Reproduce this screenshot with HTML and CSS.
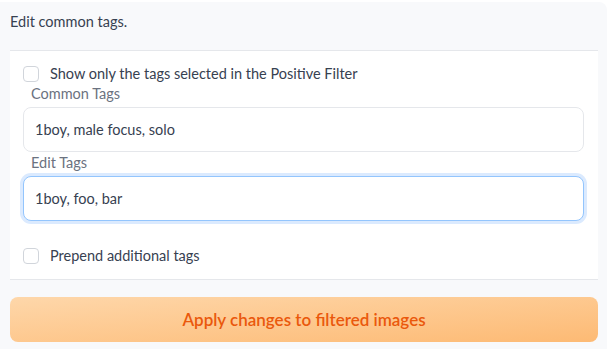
FILE: index.html
```html
<!DOCTYPE html>
<html>

<head>
    <link rel="stylesheet" href="styles.css">
</head>

<body>

    <div class="block">
        <p class="title">Edit common tags.</p>

        <div class="panel">
            <label class="check">
                <span class="box"></span>
                Show only the tags selected in the Positive Filter
            </label>

            <div class="field">
                <span class="field-label">Common Tags</span>
                <div class="text-input">1boy, male focus, solo</div>
            </div>

            <div class="field">
                <span class="field-label">Edit Tags</span>
                <div class="text-input focused">1boy, foo, bar</div>
            </div>

            <label class="check check-last">
                <span class="box"></span>
                Prepend additional tags
            </label>
        </div>

        <button class="apply">Apply changes to filtered images</button>
    </div>

</body>

</html>
```

FILE: styles.css
```css
body {
    margin: 0;
    background-color: #ffffff;
    font-family: "Source Sans Pro", Lato, "Noto Sans", sans-serif;
    font-size: 14.5px;
    color: #374151;
}

.block {
    width: 607px;
    height: 347px;
    margin-top: 2px;
    padding: 0 9px 0 10px;
    box-sizing: border-box;
    background-color: #f8f9fb;
    border-radius: 0 8px 0 0;
    overflow: hidden;
}

.title {
    margin: 0;
    padding-top: 10px;
    height: 38px;
    line-height: 20px;
}

.panel {
    background-color: #ffffff;
    border-top: 1px solid #e5e7eb;
    border-bottom: 1px solid #e5e7eb;
    padding: 13px 14px 13px 13px;
}

.check {
    display: flex;
    align-items: center;
    gap: 11px;
    line-height: 20px;
}

.check-last {
    margin-top: 25px;
}

.box {
    width: 16px;
    height: 16px;
    box-sizing: border-box;
    border: 1px solid #d1d5db;
    border-radius: 4px;
    background-color: #ffffff;
}

.field + .field {
    margin-top: 1px;
}

.field-label {
    display: block;
    padding-left: 8px;
    color: #6b7280;
    line-height: 20px;
    margin-bottom: 3px;
}

.text-input {
    height: 45px;
    box-sizing: border-box;
    padding: 0 11px;
    display: flex;
    align-items: center;
    border: 1px solid #e5e7eb;
    border-radius: 8px;
    background-color: #ffffff;
}

.text-input.focused {
    border-color: #93c5fd;
    box-shadow: 0 0 0 3px #dbeafe;
}

.apply {
    display: block;
    width: 100%;
    height: 45px;
    margin-top: 17px;
    border: none;
    border-radius: 8px;
    background: linear-gradient(to bottom right, #fed7aa, #fdba74);
    color: #ea580c;
    font-family: inherit;
    font-size: 17px;
    font-weight: 600;
    cursor: pointer;
}
```
